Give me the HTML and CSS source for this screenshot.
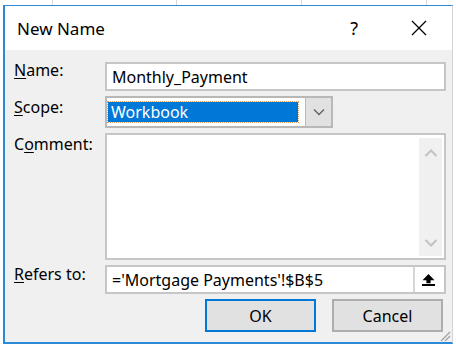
FILE: index.html
```html
<!DOCTYPE html>
<html lang="en">
<head>
    <meta charset="UTF-8">
    <title>New Name</title>
    <link rel="stylesheet" href="styles.css">
</head>
<body>
    <div class="dialog">
        <div class="titlebar">
            <span class="title">New Name</span>
            <span class="help">?</span>
            <span class="close">
                <svg width="16" height="16" viewBox="0 0 16 16"><path d="M1 1L15 15M15 1L1 15" stroke="#000" stroke-width="1.3" fill="none"/></svg>
            </span>
        </div>

        <div class="content">
            <div class="form">
                <label class="lbl"><u>N</u>ame:</label>
                <div class="field textbox">Monthly_Payment</div>

                <label class="lbl lbl-scope"><u>S</u>cope:</label>
                <div class="combo">
                    <div class="combo-value"><span class="combo-sel">Workbook</span></div>
                    <div class="combo-btn">
                        <svg width="12" height="8" viewBox="0 0 12 8"><path d="M1 1.5L6 6.5L11 1.5" stroke="#606060" stroke-width="1.3" fill="none"/></svg>
                    </div>
                </div>

                <label class="lbl lbl-comment">C<u>o</u>mment:</label>
                <div class="field memo">
                    <div class="vscroll">
                        <svg width="14" height="10" viewBox="0 0 14 10"><path d="M1.5 8L7 2.5L12.5 8" stroke="#c2c2c2" stroke-width="2" fill="none"/></svg>
                        <svg width="14" height="10" viewBox="0 0 14 10"><path d="M1.5 2L7 7.5L12.5 2" stroke="#c2c2c2" stroke-width="2" fill="none"/></svg>
                    </div>
                </div>

                <label class="lbl lbl-refers"><u>R</u>efers to:</label>
                <div class="field textbox refers">
                    <span class="refers-text">='Mortgage Payments'!$B$5</span>
                    <span class="collapse-btn">
                        <svg width="13" height="12" viewBox="0 0 13 12"><path d="M6.5 0L12.5 6.2H8.6V9.2H4.4V6.2H0.5Z" fill="#000"/><rect x="0" y="10" width="13" height="2" fill="#000"/></svg>
                    </span>
                </div>

                <div></div>
                <div class="buttons">
                    <button class="btn btn-default">OK</button>
                    <button class="btn">Cancel</button>
                </div>
            </div>
        </div>

        <svg class="grip" width="13" height="10" viewBox="0 0 13 10">
            <path d="M12 1L3 10M12 5L7 10" stroke="#a0a0a0" stroke-width="1.2"/>
        </svg>
    </div>
</body>
</html>
```

FILE: styles.css
```css
body {
    margin: 0;
    width: 456px;
    height: 346px;
    overflow: hidden;
    font-family: "Noto Sans", "Open Sans", sans-serif;
    color: #000;
    background-color: #fff;
    background-image:
        linear-gradient(#d8d8d8, #d8d8d8),
        linear-gradient(#d8d8d8, #d8d8d8),
        linear-gradient(#d8d8d8, #d8d8d8),
        linear-gradient(#d8d8d8, #d8d8d8);
    background-size: 1px 5px;
    background-position: 52px 0, 176px 0, 301px 0, 426px 0;
    background-repeat: no-repeat;
}

.dialog {
    position: relative;
    margin: 5px 0 0 3px;
    width: 450px;
    height: 339px;
    box-sizing: border-box;
    border: 1px solid #2b8ad8;
    border-left-width: 2px;
    border-bottom-width: 2px;
    border-right-color: #d4d4d4;
    display: flex;
    flex-direction: column;
    background: #f0f0f0;
}

.titlebar {
    height: 44px;
    background: #fff;
    display: flex;
    align-items: center;
    font-size: 17px;
}
.title { margin-left: 12px; flex: 1; }
.help { margin-right: 53px; font-size: 18px; }
.close { display: flex; margin-right: 25px; }

.content { flex: 1; padding: 12px 0 0 9px; }

.form {
    display: grid;
    grid-template-columns: 91px 341px;
    grid-template-rows: 29px 32px 127px 29px 33px;
    row-gap: 5px;
    font-size: 16px;
}

.lbl { line-height: 17px; padding-top: 0; }
.lbl-scope { padding-top: 3px; }
.lbl-comment { padding-top: 3px; }
.lbl-refers { padding-top: 1px; }
u { text-decoration-thickness: 1px; text-underline-offset: 2px; }

.field {
    box-sizing: border-box;
    border: 2px solid #c6c6c6;
    background: #fff;
}
.textbox {
    display: flex;
    align-items: center;
    padding-left: 5px;
    line-height: 20px;
}

.combo {
    width: 228px;
    box-sizing: border-box;
    border: 2px solid #b8b8b8;
    background: #fff;
    display: flex;
}
.combo-value { flex: 1; display: flex; align-items: center; padding-left: 1px; }
.combo-sel {
    width: 187px;
    height: 20px;
    padding-left: 3px;
    line-height: 20px;
    color: #fff;
    background: #0078d7;
    outline: 1px dotted #e8a060;
}
.combo-btn {
    width: 25px;
    background: #e1e1e1;
    border-left: 1px solid #b8b8b8;
    display: flex;
    align-items: center;
    justify-content: center;
}

.memo { display: flex; justify-content: flex-end; padding: 3px 2px 2px 0; }
.vscroll {
    width: 23px;
    background: #f0f0f0;
    display: flex;
    flex-direction: column;
    justify-content: space-between;
    align-items: center;
    padding: 10px 0 8px;
}

.refers { padding-right: 2px; justify-content: space-between; }
.collapse-btn {
    width: 29px;
    height: 25px;
    box-sizing: border-box;
    border-left: 2px solid #d6d6d6;
    display: flex;
    align-items: center;
    justify-content: center;
}

.buttons {
    display: flex;
    justify-content: flex-end;
    gap: 16px;
    padding-right: 3px;
}
.btn {
    width: 111px;
    height: 33px;
    box-sizing: border-box;
    border: 2px solid #adadad;
    background: #e1e1e1;
    font-family: inherit;
    font-size: 16px;
    color: #000;
    padding: 0;
}
.btn-default { border-color: #0078d7; }

.grip { position: absolute; right: 1px; bottom: 1px; }
```
